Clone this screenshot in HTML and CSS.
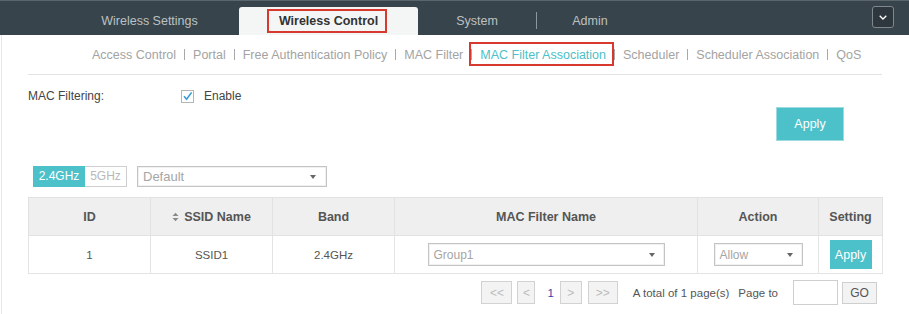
FILE: index.html
```html
<!DOCTYPE html>
<html lang="en">
<head>
    <meta charset="UTF-8">
    <meta name="viewport" content="width=device-width, initial-scale=1.0">
    <title>Wireless Control - MAC Filter Association</title>
    <link rel="stylesheet" href="styles.css">
</head>
<body>
    <div class="topbar">
        <div class="tab">Wireless Settings</div>
        <div class="tab tab-active"><span class="marked">Wireless Control</span></div>
        <div class="tab tab-system">System</div>
        <span class="tab-sep"></span>
        <div class="tab tab-admin">Admin</div>
        <button class="menu-btn">
            <svg width="8" height="5" viewBox="0 0 8 5"><path d="M0.7 0.7 L4 4 L7.3 0.7" fill="none" stroke="#fff" stroke-width="1.3"/></svg>
        </button>
    </div>

    <div class="main">
        <div class="subnav">
            <a href="#">Access Control</a><span class="sep"></span>
            <a href="#">Portal</a><span class="sep"></span>
            <a href="#">Free Authentication Policy</a><span class="sep"></span>
            <a href="#">MAC Filter</a><span class="sep"></span>
            <a href="#" class="current">MAC Filter Association</a><span class="sep"></span>
            <a href="#">Scheduler</a><span class="sep"></span>
            <a href="#">Scheduler Association</a><span class="sep"></span>
            <a href="#">QoS</a>
        </div>

        <div class="field-row">
            <span class="field-label">MAC Filtering:</span>
            <span class="checkbox">
                <svg width="13" height="13" viewBox="0 0 13 13"><rect x="0.5" y="0.5" width="12" height="12" fill="#fff" stroke="#b5b5b5"/><path d="M3 6.3 L5.6 9.3 L10.6 2.4" fill="none" stroke="#3b9bd8" stroke-width="1.6"/></svg>
            </span>
            <span>Enable</span>
        </div>

        <div class="apply-row">
            <button class="btn-apply">Apply</button>
        </div>

        <div class="filter-row">
            <div class="band-toggle">
                <span class="band band-on">2.4GHz</span>
                <span class="band band-off">5GHz</span>
            </div>
            <div class="select select-ssid"><span>Default</span><i class="caret"></i></div>
        </div>

        <table class="grid">
            <colgroup>
                <col style="width:122px"><col style="width:122px"><col style="width:122px">
                <col style="width:303px"><col style="width:121px"><col style="width:64px">
            </colgroup>
            <thead>
                <tr>
                    <th>ID</th>
                    <th><svg class="sort" width="7" height="10" viewBox="0 0 7 10"><path d="M0.5 4 L3.5 0.8 L6.5 4 Z M0.5 6 L3.5 9.2 L6.5 6 Z" fill="#8a8a8a"/></svg>SSID Name</th>
                    <th>Band</th>
                    <th>MAC Filter Name</th>
                    <th>Action</th>
                    <th>Setting</th>
                </tr>
            </thead>
            <tbody>
                <tr>
                    <td>1</td>
                    <td>SSID1</td>
                    <td>2.4GHz</td>
                    <td><div class="select select-group"><span>Group1</span><i class="caret"></i></div></td>
                    <td><div class="select select-action"><span>Allow</span><i class="caret"></i></div></td>
                    <td><button class="btn-small">Apply</button></td>
                </tr>
            </tbody>
        </table>

        <div class="pager">
            <span class="pg pg-first">&lt;&lt;</span>
            <span class="pg pg-prev">&lt;</span>
            <span class="pg-num">1</span>
            <span class="pg pg-next">&gt;</span>
            <span class="pg pg-last">&gt;&gt;</span>
            <span class="pg-total">A total of 1 page(s)</span>
            <span class="pg-label">Page to</span>
            <input class="pg-input" type="text">
            <button class="pg-go">GO</button>
        </div>
    </div>
</body>
</html>
```

FILE: styles.css
```css
body {
    margin: 0;
    font-family: "Liberation Sans", Arial, sans-serif;
    color: #555;
    background: #fff;
}

/* top tabs */
.topbar {
    display: flex;
    align-items: flex-end;
    height: 34px;
    border-top: 1px solid #5a666c;
    background: #37444b;
    padding-left: 60px;
}
.tab {
    width: 179px;
    height: 28px;
    line-height: 28px;
    text-align: center;
    font-size: 12.5px;
    color: #bcc1c3;
}
.tab-active {
    background: #f4f6f6;
    border-radius: 3px 3px 0 0;
    color: #333;
    font-weight: bold;
}
.tab-system {
    width: 118px;
}
.tab-admin {
    width: 106px;
}
.tab-sep {
    align-self: flex-start;
    width: 1px;
    height: 17px;
    margin-top: 11px;
    background: #8e979c;
}
.marked {
    position: relative;
}
.marked::after {
    content: "";
    position: absolute;
    left: -12px;
    right: -9px;
    top: -5px;
    bottom: -5px;
    border: 2px solid #d8392e;
}
.menu-btn {
    align-self: flex-start;
    display: flex;
    align-items: center;
    justify-content: center;
    width: 22px;
    height: 22px;
    margin: 5px 15px 0 auto;
    padding: 0;
    background: #2d373d;
    border: 1px solid #7f888d;
    border-radius: 3px;
}

/* main area */
.main {
    margin-left: 1px;
    border-left: 1px solid #e6e6e6;
    padding-bottom: 9px;
}
.subnav {
    display: flex;
    align-items: center;
    height: 39px;
    margin: 0 27px 0 26px;
    padding-left: 64px;
    border-bottom: 1px solid #e3e3e3;
    font-size: 12.5px;
}
.subnav a {
    color: #a3a3a3;
    text-decoration: none;
}
.subnav .sep {
    width: 1px;
    height: 11px;
    margin: 0 8px;
    background: #a8a8a8;
}
.subnav a.current {
    position: relative;
    color: #4cbfc9;
}
.subnav a.current::after {
    content: "";
    position: absolute;
    left: -11px;
    right: -8px;
    top: -6px;
    bottom: -4px;
    border: 2px solid #d8392e;
}

.field-row {
    display: flex;
    align-items: center;
    height: 20px;
    margin-top: 11px;
    padding-left: 26px;
    font-size: 12px;
    color: #444;
}
.field-label {
    width: 153px;
}
.checkbox {
    display: flex;
    margin-right: 10px;
}

.apply-row {
    display: flex;
    justify-content: flex-end;
    margin-top: 1px;
    padding-right: 65px;
}
.btn-apply {
    width: 68px;
    height: 34px;
    padding: 0;
    background: #4dc1ca;
    border: 1px solid #9ddbe0;
    color: #fff;
    font-family: inherit;
    font-size: 12.5px;
}

.filter-row {
    display: flex;
    height: 21px;
    margin-top: 25px;
    padding-left: 31px;
}
.band-toggle {
    display: flex;
}
.band {
    box-sizing: border-box;
    height: 21px;
    line-height: 19px;
    text-align: center;
    font-size: 12px;
}
.band-on {
    width: 52px;
    background: #4dc1ca;
    border: 1px solid #4dc1ca;
    color: #fff;
}
.band-off {
    width: 42px;
    border: 1px solid #cfcfcf;
    border-left: none;
    color: #b8b8b8;
}

.select {
    position: relative;
    box-sizing: border-box;
    display: flex;
    align-items: center;
    padding-left: 5px;
    background: #fff;
    border: 1px solid #c4c4c4;
    box-shadow: inset 0 0 0 1px #f0f0f0;
    color: #a5a5a5;
    text-align: left;
}
.caret {
    position: absolute;
    right: 9px;
    top: 50%;
    margin-top: -2px;
    border-top: 4px solid #666;
    border-left: 3.5px solid transparent;
    border-right: 3.5px solid transparent;
}
.select-ssid {
    width: 190px;
    height: 21px;
    margin-left: 10px;
    font-size: 13px;
}
.select-ssid .caret {
    right: 10px;
}
.select-group {
    width: 237px;
    height: 23px;
    margin: 0 auto;
    font-size: 12px;
}
.select-action {
    width: 89px;
    height: 23px;
    margin: 0 auto;
    font-size: 12px;
}

/* table */
.grid {
    width: 854px;
    margin: 10px 0 0 26px;
    border-collapse: collapse;
    table-layout: fixed;
}
.grid th {
    height: 37px;
    padding: 0;
    background: #efefef;
    border: 1px solid #e2e2e2;
    color: #555;
    font-size: 12.5px;
    font-weight: bold;
}
.grid td {
    height: 37px;
    padding: 0;
    border: 1px solid #e4e4e4;
    text-align: center;
    font-size: 11.5px;
    color: #555;
}
.sort {
    margin-right: 5px;
    vertical-align: -1px;
}
.btn-small {
    width: 42px;
    height: 29px;
    padding: 0;
    background: #4dc1ca;
    border: none;
    color: #fff;
    font-family: inherit;
    font-size: 12.5px;
}

/* pager */
.pager {
    display: flex;
    align-items: center;
    justify-content: flex-end;
    height: 25px;
    margin-top: 6px;
    padding-right: 32px;
    font-size: 11.5px;
    color: #555;
}
.pg {
    box-sizing: border-box;
    display: flex;
    align-items: center;
    justify-content: center;
    height: 23px;
    background: #f3f3f3;
    border: 1px solid #d2d2d2;
    color: #bcbcbc;
    font-size: 12px;
}
.pg-first {
    width: 31px;
}
.pg-prev {
    width: 18px;
    margin-left: 5px;
}
.pg-num {
    margin-left: 12px;
    color: #2f47a8;
}
.pg-next {
    width: 22px;
    margin-left: 6px;
}
.pg-last {
    width: 30px;
    margin-left: 6px;
}
.pg-total {
    margin-left: 15px;
}
.pg-label {
    margin-left: 9px;
}
.pg-input {
    box-sizing: border-box;
    width: 45px;
    height: 25px;
    margin: 0 0 0 15px;
    border: 1px solid #cfcfcf;
}
.pg-go {
    box-sizing: border-box;
    width: 35px;
    height: 22px;
    margin-left: 4px;
    padding: 0;
    background: #f3f3f3;
    border: 1px solid #cfcfcf;
    color: #555;
    font-family: inherit;
    font-size: 12px;
}
```
